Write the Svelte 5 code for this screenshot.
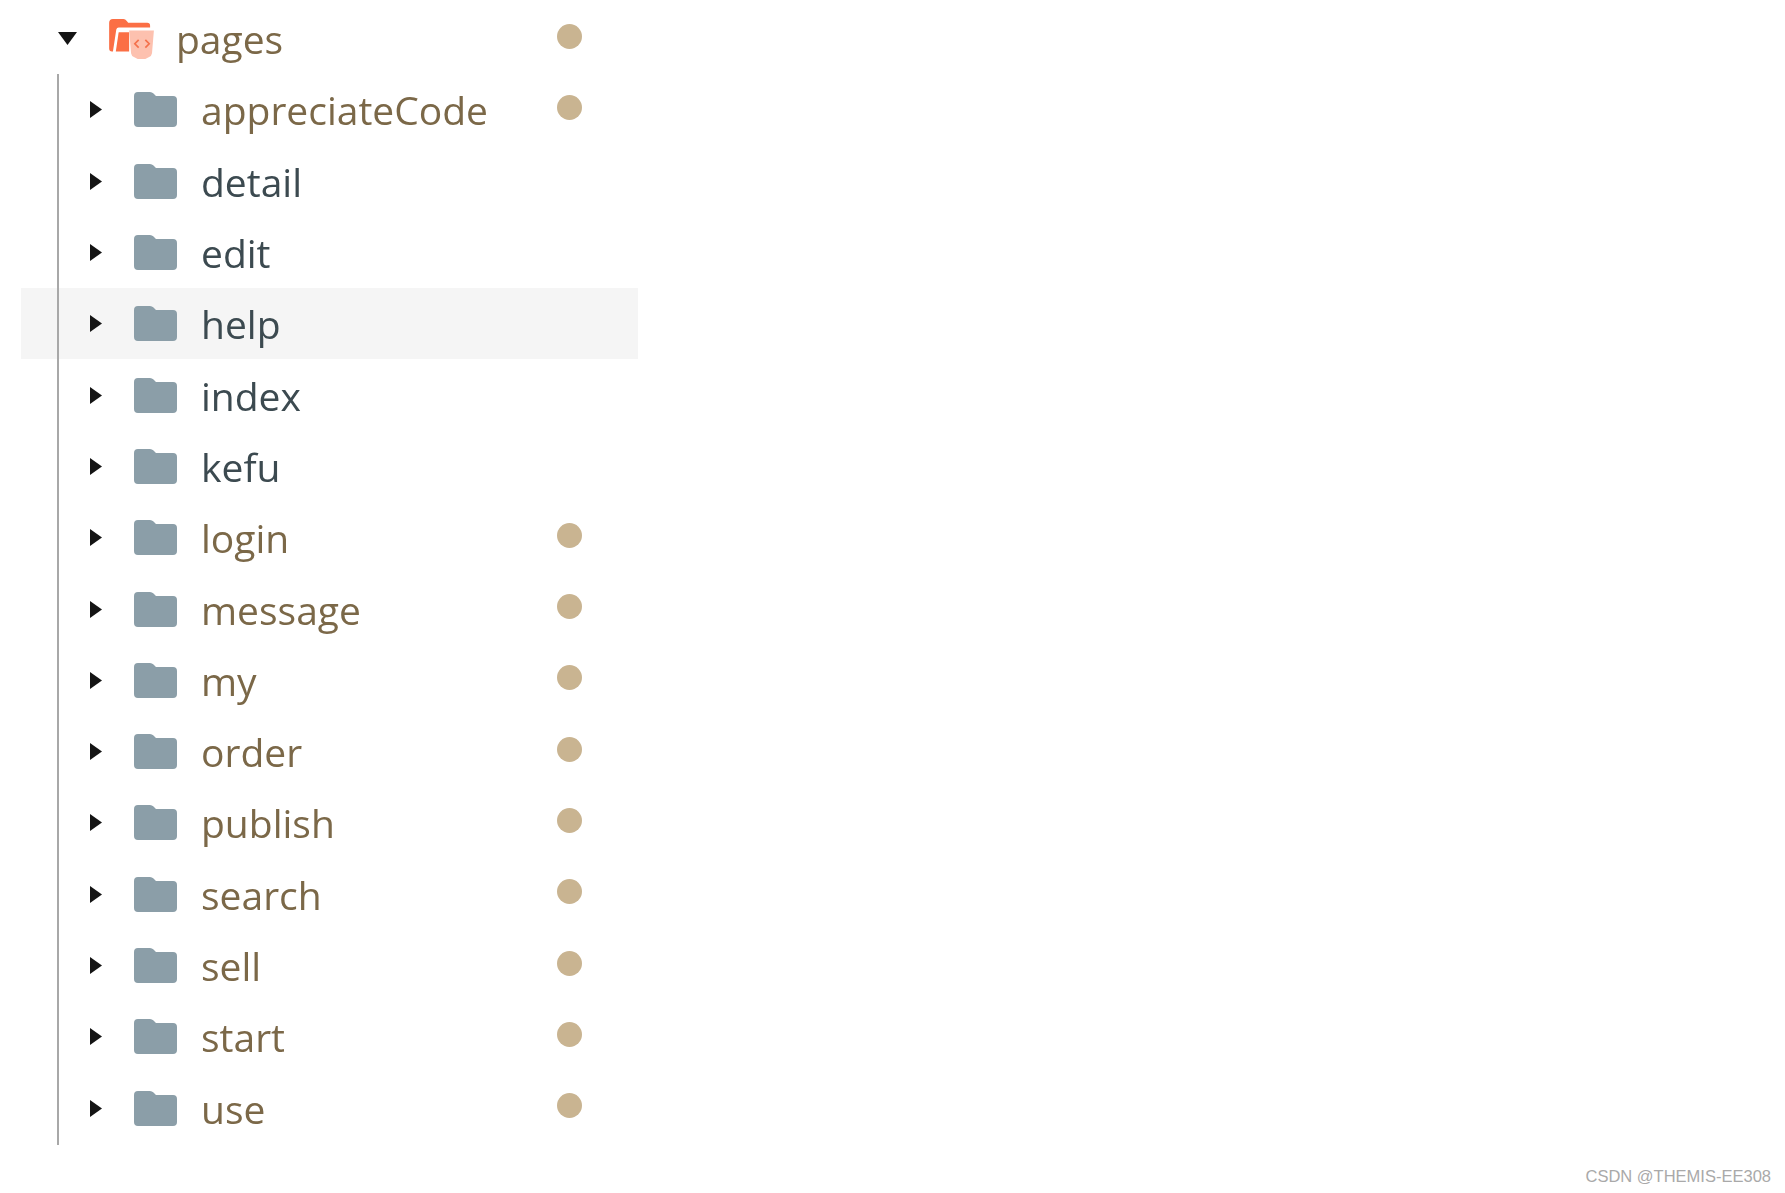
<script>
	const folders = [
		{ name: 'appreciateCode', changed: true },
		{ name: 'detail', changed: false },
		{ name: 'edit', changed: false },
		{ name: 'help', changed: false, hover: true },
		{ name: 'index', changed: false },
		{ name: 'kefu', changed: false },
		{ name: 'login', changed: true },
		{ name: 'message', changed: true },
		{ name: 'my', changed: true },
		{ name: 'order', changed: true },
		{ name: 'publish', changed: true },
		{ name: 'search', changed: true },
		{ name: 'sell', changed: true },
		{ name: 'start', changed: true },
		{ name: 'use', changed: true }
	];
</script>

<div class="page">
	<div class="tree">
		<!-- Root folder -->
		<div class="row row--root">
			<svg class="caret-down" width="19" height="13" viewBox="0 0 19 13"><path d="M0 0h19L9.500 13z" /></svg>
			<svg class="root-icon" width="48" height="40" viewBox="0 0 48 42">
				<path fill="#fb6f45" d="M4 0h11q2 0 3.500 2l1.500 2h20q3 0 3 3v2H10q-2 0-2.500 2L4 34H3q-3 0-3-3V4q0-4 4-4z" />
				<path fill="#fb6f45" d="M10 14h11v20H7z" />
				<path fill="#fdc1af" d="M21 12h26l-2 24q-.5 3-3 4l-4 2h-8l-4-2q-2.500-1-3-4z" />
				<path fill="none" stroke="#f4714c" stroke-width="1.800" d="M31 22l-4 4 4 4M38 22l4 4-4 4" />
			</svg>
			<span class="name name--changed">pages</span>
			<span class="dot"></span>
		</div>

		<!-- Children -->
		<div class="children">
			{#each folders as f}
				<div class="row" class:row--hover={f.hover}>
					<svg class="caret" width="12" height="17" viewBox="0 0 12 17"><path d="M0 0l12 8.500L0 17z" /></svg>
					<svg class="folder" width="43" height="35" viewBox="0 0 43 35">
						<path fill="#8b9ea8" d="M4 0h12q2 0 3.500 1.500L22 4h17q4 0 4 4v23q0 4-4 4H4q-4 0-4-4V4q0-4 4-4z" />
					</svg>
					<span class="name" class:name--changed={f.changed}>{f.name}</span>
					{#if f.changed}
						<span class="dot"></span>
					{/if}
				</div>
			{/each}
		</div>
	</div>

	<div class="watermark">CSDN @THEMIS-EE308</div>
</div>

<style>
	:global(body) {
		margin: 0;
		background: #fff;
	}

	.page {
		height: 1193px;
		display: flex;
		flex-direction: column;
		overflow: hidden;
	}

	.tree {
		width: 617px;
		margin-left: 21px;
		padding-top: 3px;
		font-family: 'Open Sans', sans-serif;
		font-size: 39px;
		filter: blur(0.6px);
	}

	.row {
		position: relative;
		height: 71.3px;
		display: flex;
		align-items: center;
		padding-left: 69px;
		box-sizing: border-box;
	}

	.row--root {
		padding-left: 37px;
	}

	.row--hover {
		background: #f5f5f5;
	}

	.caret,
	.caret-down {
		flex-shrink: 0;
		fill: #141414;
	}

	.caret-down {
		margin-right: 31px;
	}

	.root-icon {
		flex-shrink: 0;
		margin-right: 20px;
	}

	.caret {
		margin-right: 32px;
	}

	.folder {
		flex-shrink: 0;
		margin-right: 24px;
	}

	.name {
		color: #3c4a50;
		line-height: 1;
	}

	.name--changed {
		color: #7b6848;
	}

	.dot {
		position: absolute;
		left: 536px;
		top: 50%;
		width: 25px;
		height: 25px;
		margin-top: -15px;
		border-radius: 50%;
		background: #c9b491;
	}

	/* Indent guide sits over the rows */
	.children {
		position: relative;
	}

	.children::before {
		content: '';
		position: absolute;
		left: 36px;
		top: 0;
		bottom: -1px;
		width: 2px;
		background: #a8a8a8;
		z-index: 1;
	}

	.watermark {
		margin-top: auto;
		padding: 0 14px 7px 0;
		text-align: right;
		font-family: 'Liberation Sans', sans-serif;
		font-size: 16.5px;
		color: #a9a9a9;
	}
</style>
